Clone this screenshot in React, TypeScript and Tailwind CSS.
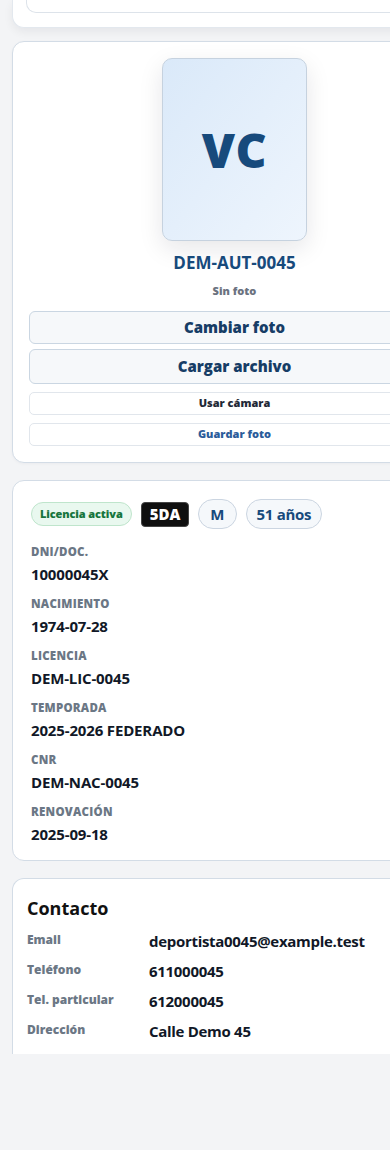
import React from "react";

const font = { fontFamily: '"Open Sans", "Noto Sans", "Liberation Sans", sans-serif' };

function Field({ label, value, first }: { label: string; value: string; first?: boolean }) {
  return (
    <div className={first ? "mt-[16px]" : "mt-[13px]"}>
      <div className="text-[11.5px] leading-[14px] font-extrabold uppercase tracking-[0.02em] text-[#6b7785]">{label}</div>
      <div className="mt-[5px] text-[15px] leading-[20px] font-bold tracking-[-0.01em] text-[#111827]">{value}</div>
    </div>
  );
}

function ContactRow({ label, value }: { label: string; value: string }) {
  return (
    <div className="flex items-start h-[20px] mt-[10px]">
      <div className="w-[122px] shrink-0 text-[12px] leading-[18px] font-extrabold text-[#6b7785]">{label}</div>
      <div className="text-[15px] leading-[20px] font-bold tracking-[-0.02em] text-[#111827] whitespace-nowrap">{value}</div>
    </div>
  );
}

export default function App() {
  return (
    <div className="min-h-[1150px] w-full overflow-hidden bg-[#f3f4f6]" style={font}>
      <div className="w-[445px] ml-[12px]">
        {/* top card (scrolled) */}
        <div className="h-[28px] rounded-b-[12px] border border-t-0 border-[#e3e8ee] bg-white shadow-[0_4px_10px_rgba(15,23,42,0.06)]">
          <div className="ml-[13px] mr-[13px] h-[13px] rounded-b-[10px] border border-t-0 border-[#dde3ea] bg-white" />
        </div>

        {/* photo card */}
        <div className="mt-[13px] rounded-[12px] border border-[#d3dce6] bg-white px-[16px] pt-[16px] pb-[16px] shadow-[0_1px_3px_rgba(15,23,42,0.04)]">
          <div className="flex flex-col items-center">
            <div className="w-[145px] h-[183px] rounded-[10px] border border-[#c6d2df] bg-gradient-to-br from-[#dae9f9] to-[#eef5fd] flex items-center justify-center shadow-[0_8px_24px_rgba(15,23,42,0.10)]">
              <span className="text-[48px] leading-none font-black text-[#174a7c] tracking-[0.01em]">VC</span>
            </div>
            <div className="mt-[11px] text-[17px] leading-[22px] font-bold text-[#174a7c]">DEM-AUT-0045</div>
            <div className="mt-[9px] text-[11px] leading-[15px] font-extrabold text-[#6b7280]">Sin foto</div>
          </div>
          <button className="mt-[13px] w-full h-[33px] rounded-[6px] border border-[#cad6e2] bg-[#f6f8fa] text-[15px] font-extrabold text-[#173d66] flex items-center justify-center">Cambiar foto</button>
          <button className="mt-[5px] w-full h-[35px] rounded-[6px] border border-[#cad6e2] bg-[#f6f8fa] text-[15px] font-extrabold text-[#173d66] flex items-center justify-center">Cargar archivo</button>
          <button className="mt-[8px] w-full h-[23px] rounded-[5px] border border-[#e1e6ec] bg-white text-[11px] font-extrabold text-[#1f2937] flex items-center justify-center">Usar cámara</button>
          <button className="mt-[8px] w-full h-[23px] rounded-[5px] border border-[#e1e6ec] bg-white text-[11px] font-extrabold text-[#2b5c9a] flex items-center justify-center">Guardar foto</button>
        </div>

        {/* info card */}
        <div className="mt-[17px] rounded-[12px] border border-[#d3dce6] bg-white px-[18px] pt-[18px] pb-[16px]">
          <div className="flex items-center gap-[9px]">
            <span className="h-[24px] px-[8px] rounded-full border border-[#bfe5cc] bg-[#e9f8ef] text-[11px] font-extrabold tracking-[-0.01em] text-[#17753d] flex items-center">Licencia activa</span>
            <span className="h-[25px] px-[8px] rounded-[4px] border border-[#444] bg-[#0f0f0f] text-[15px] font-extrabold text-white flex items-center">5DA</span>
            <span className="h-[30px] px-[11px] rounded-full border border-[#cbd5e1] bg-[#f5f8fb] text-[15px] font-bold text-[#174a7c] flex items-center">M</span>
            <span className="h-[30px] px-[10px] rounded-full border border-[#cbd5e1] bg-[#f5f8fb] text-[15px] font-bold tracking-[-0.02em] text-[#174a7c] flex items-center">51 años</span>
          </div>
          <Field first label="DNI/DOC." value="10000045X" />
          <Field label="Nacimiento" value="1974-07-28" />
          <Field label="Licencia" value="DEM-LIC-0045" />
          <Field label="Temporada" value="2025-2026 FEDERADO" />
          <Field label="CNR" value="DEM-NAC-0045" />
          <Field label="Renovación" value="2025-09-18" />
        </div>

        {/* contact card (clipped) */}
        <div className="mt-[17px] h-[176px] overflow-hidden rounded-t-[12px] border border-b-0 border-[#d3dce6] bg-white px-[14px] pt-[16px]">
          <div className="text-[18px] leading-[26px] font-bold text-[#111111]">Contacto</div>
          <div className="mt-[3px]">
            <ContactRow label="Email" value="deportista0045@example.test" />
            <ContactRow label="Teléfono" value="611000045" />
            <ContactRow label="Tel. particular" value="612000045" />
            <ContactRow label="Dirección" value="Calle Demo 45" />
          </div>
        </div>
      </div>
    </div>
  );
}
